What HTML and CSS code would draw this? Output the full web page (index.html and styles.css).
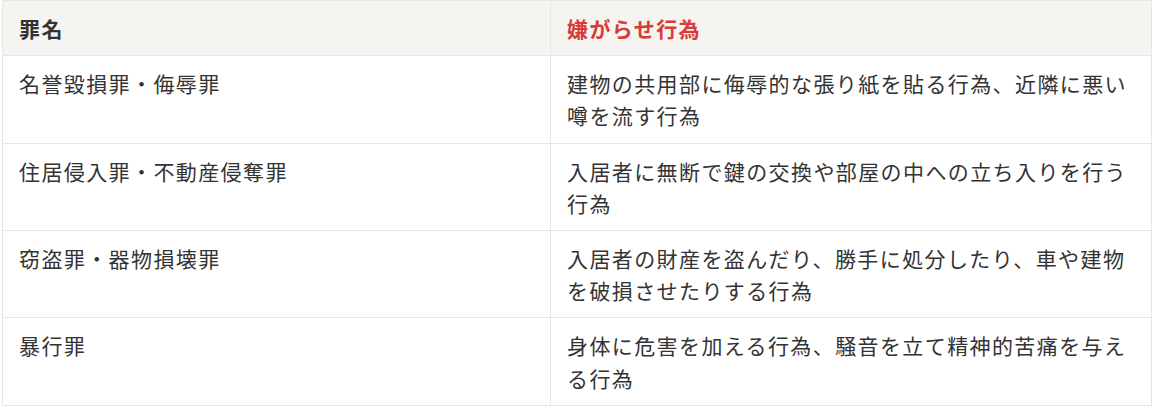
FILE: index.html
```html
<!DOCTYPE html>
<html lang="ja">
<head>
<meta charset="utf-8">
<title>罪名と嫌がらせ行為</title>
<link rel="stylesheet" href="styles.css">
</head>
<body>
<table class="crime-table">
  <colgroup>
    <col class="col-name">
    <col class="col-act">
  </colgroup>
  <thead>
    <tr>
      <th class="th-name">罪名</th>
      <th class="th-act">嫌がらせ行為</th>
    </tr>
  </thead>
  <tbody>
    <tr>
      <td>名誉毀損罪・侮辱罪</td>
      <td>建物の共用部に侮辱的な張り紙を貼る行為、近隣に悪い噂を流す行為</td>
    </tr>
    <tr>
      <td>住居侵入罪・不動産侵奪罪</td>
      <td>入居者に無断で鍵の交換や部屋の中への立ち入りを行う行為</td>
    </tr>
    <tr>
      <td>窃盗罪・器物損壊罪</td>
      <td>入居者の財産を盗んだり、勝手に処分したり、車や建物を破損させたりする行為</td>
    </tr>
    <tr>
      <td>暴行罪</td>
      <td>身体に危害を加える行為、騒音を立て精神的苦痛を与える行為</td>
    </tr>
  </tbody>
</table>
</body>
</html>
```
FILE: styles.css
```css
html, body {
  margin: 0;
  padding: 0;
  background: #ffffff;
}

body {
  padding-left: 2px;
  font-family: "Noto Sans CJK JP", "Noto Sans", sans-serif;
  color: #333333;
}

.crime-table {
  width: 1150px;
  border-collapse: collapse;
  table-layout: fixed;
  font-size: 21px;
  line-height: 32.2px;
  letter-spacing: 1.4px;
}

.col-name {
  width: 548px;
}

.crime-table th,
.crime-table td {
  border: 1px solid #e6e6e6;
  padding: 11px 14px 11px 16px;
  text-align: left;
  vertical-align: top;
}

.crime-table thead th {
  background: #f5f4f1;
  font-weight: 700;
}

.th-name {
  color: #333333;
}

.th-act {
  color: #d93a3a;
}

.crime-table td {
  font-weight: 400;
}
```
